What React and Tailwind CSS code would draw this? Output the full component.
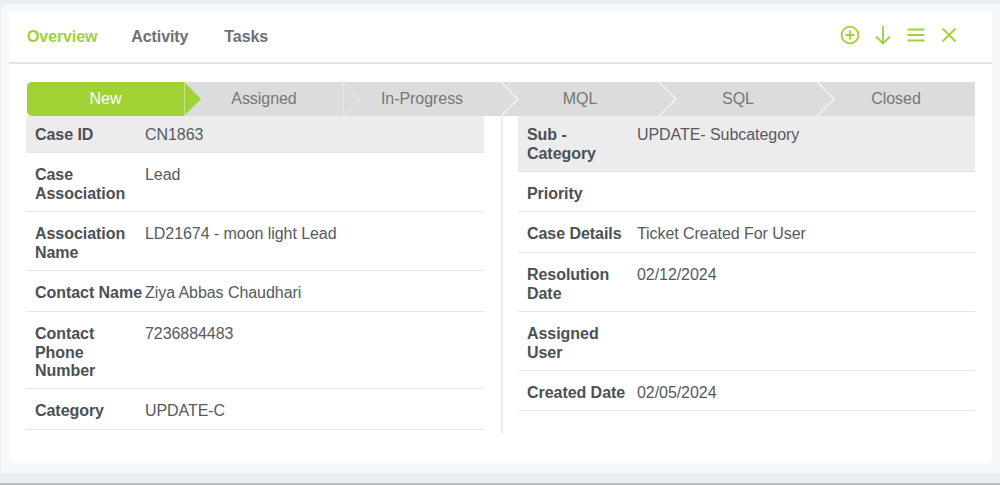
import React from 'react';

const stages = ['New', 'Assigned', 'In-Progress', 'MQL', 'SQL', 'Closed'];

const leftRows = [
  ['Case ID', 'CN1863', 'pt-[10px] pb-[8px]'],
  ['Case Association', 'Lead', 'pt-[13px] pb-[9px]'],
  ['Association Name', 'LD21674 - moon light Lead', 'pt-[13px] pb-[9px]'],
  ['Contact Name', 'Ziya Abbas Chaudhari', 'pt-[13px] pb-[9px]'],
  ['Contact Phone Number', '7236884483', 'pt-[13px] pb-[8.5px]'],
  ['Category', 'UPDATE-C', 'pt-[13px] pb-[9px]'],
];

// row heights in the right column differ by a pixel here and there
const rightRows = [
  ['Sub - Category', 'UPDATE- Subcategory', 'pt-[10px] pb-[9px]'],
  ['Priority', '', 'pt-[13px] pb-[8px]'],
  ['Case Details', 'Ticket Created For User', 'pt-[13px] pb-[9px]'],
  ['Resolution Date', '02/12/2024', 'pt-[13px] pb-[9px]'],
  ['Assigned User', '', 'pt-[13px] pb-[9px]'],
  ['Created Date', '02/05/2024', 'pt-[13px] pb-[8px]'],
];

function Icon({ children }) {
  return (
    <svg width="24" height="24" viewBox="0 0 24 24" fill="none" stroke="#a0d236" strokeWidth="1.8" className="block">
      {children}
    </svg>
  );
}

function Stage({ label, index }) {
  const active = index === 0;
  return (
    <div
      className={`relative flex-1 flex items-center justify-center tracking-[-0.05px] ${
        active ? 'bg-[#a0d236] text-white rounded-l-[5px]' : 'text-[#777777]'
      }`}
    >
      <span className={active ? '-ml-px' : ''}>{label}</span>
      {active && (
        <svg width="18" height="34" viewBox="0 0 18 34" className="absolute left-[157px] top-0 z-10">
          <polygon points="0,0 17,17 0,34" fill="#a0d236" />
          <line x1="0.5" y1="0" x2="0.5" y2="34" stroke="#c6e48a" strokeWidth="1" />
        </svg>
      )}
      {index === 1 && (
        <svg width="18" height="34" viewBox="0 0 18 34" fill="none" className="absolute left-full top-0 z-10">
          <line x1="0" y1="0" x2="0" y2="34" stroke="#f0f0f0" strokeWidth="1.2" />
          <polyline points="0,0 17,17 0,34" stroke="#e8e8e8" strokeWidth="1" />
        </svg>
      )}
      {index > 1 && index < stages.length - 1 && (
        <svg width="18" height="34" viewBox="0 0 18 34" fill="none" className="absolute left-full top-0 z-10">
          <polyline points="0,0 17,17 0,34" stroke="#f4f4f4" strokeWidth="1.5" />
        </svg>
      )}
    </div>
  );
}

function Row({ label, value, spacing, first }) {
  return (
    <div className={`flex min-h-[18px] box-content pl-[9px] border-b border-[#e5e5e5] ${spacing} ${first ? 'bg-[#ececec]' : ''}`}>
      <div className="w-[110px] shrink-0 -mb-px font-bold text-[#4b5056] leading-[18.5px] tracking-[-0.05px]">{label}</div>
      <div className="text-[#555a60] tracking-[-0.06px]">{value}</div>
    </div>
  );
}

export default function App() {
  return (
    <div className="h-[485px] overflow-hidden bg-[#e9eef0] border-b-2 border-[#b8bcbe] font-['Liberation_Sans',Arial,sans-serif] text-base leading-[18px]">
      <div className="ml-px mt-1 h-[469px] bg-[#f6f8f9] rounded-tl-md pl-2 pt-2 pr-2">
        <div className="w-[983px] h-[451px] bg-white rounded-b-md">
          <div className="h-[52px] flex items-center justify-between border-b-2 border-[#e1e6e9] pl-[18px] pr-[31.5px]">
            <div className="flex gap-[34px] font-bold text-[#6b7077] mt-[-1px] tracking-[-0.1px]">
              <span className="text-[#a0d236]">Overview</span>
              <span>Activity</span>
              <span className="ml-[2px]">Tasks</span>
            </div>
            <div className="flex gap-[9px] mt-[-5px]">
              <Icon>
                <circle cx="12" cy="12" r="8.4" />
                <path d="M12 7.5v9M7.5 12h9" />
              </Icon>
              <Icon>
                <path d="M12 3v17.5M5 13.5l7 7 7-7" />
              </Icon>
              <Icon>
                <path d="M3.5 6.5h17M3.5 12h17M3.5 17.5h17" />
              </Icon>
              <Icon>
                <path d="M5.5 5.5l13 13M18.5 5.5l-13 13" />
              </Icon>
            </div>
          </div>

          <div className="pl-[18px] pt-[18px] w-[966px]">
            <div className="flex h-[34px] bg-[#dcdcdc] rounded-l-[5px]">
              {stages.map((s, i) => (
                <Stage key={s} label={s} index={i} />
              ))}
            </div>
            <div className="flex h-[318px]">
              <div className="w-[458px] -ml-px">
                {leftRows.map(([l, v, sp], i) => (
                  <Row key={l} label={l} value={v} spacing={sp} first={i === 0} />
                ))}
              </div>
              <div className="ml-[17px] pl-[15px] border-l-2 border-[#eeeeee] w-[474px]">
                {rightRows.map(([l, v, sp], i) => (
                  <Row key={l} label={l} value={v} spacing={sp} first={i === 0} />
                ))}
              </div>
            </div>
          </div>
        </div>
      </div>
    </div>
  );
}
